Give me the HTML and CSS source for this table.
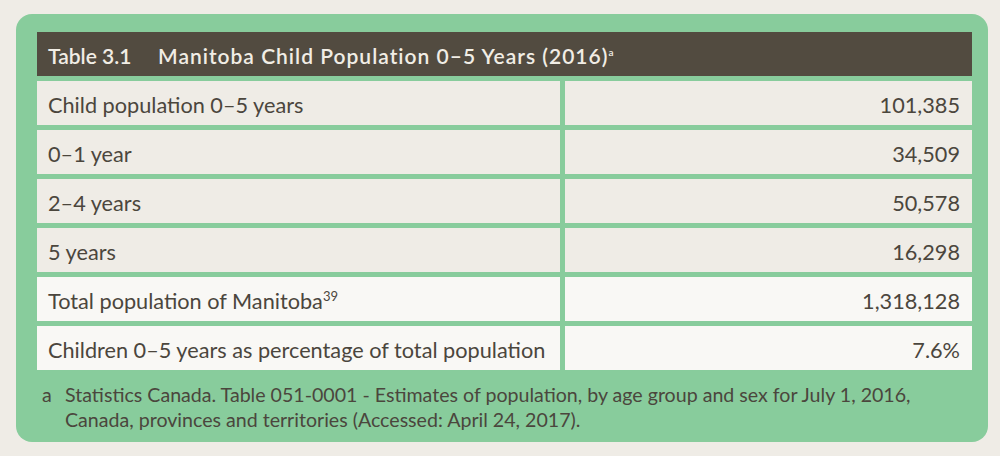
FILE: index.html
```html
<!DOCTYPE html>
<html lang="en">
<head>
<meta charset="utf-8">
<title>Table 3.1 Manitoba Child Population 0–5 Years (2016)</title>
<link rel="stylesheet" href="styles.css">
</head>
<body>
<div class="card">
  <div class="grid">
    <div class="head"><span class="tnum">Table 3.1</span><span class="ttl">Manitoba Child Population 0–5 Years (2016)<sup class="hsup">a</sup></span></div>
    <div class="cell">Child population 0–5 years</div><div class="cell num">101,385</div>
    <div class="cell">0–1 year</div><div class="cell num">34,509</div>
    <div class="cell">2–4 years</div><div class="cell num">50,578</div>
    <div class="cell">5 years</div><div class="cell num">16,298</div>
    <div class="cell light"><span>Total population of Manitoba<sup class="ref">39</sup></span></div><div class="cell light num">1,318,128</div>
    <div class="cell light">Children 0–5 years as percentage of total population</div><div class="cell light num">7.6%</div>
  </div>
  <div class="note">
    <span class="mark">a</span>
    <p class="ntext">Statistics Canada. Table 051-0001 - Estimates of population, by age group and sex for July 1, 2016, Canada, provinces and territories (Accessed: April 24, 2017).</p>
  </div>
</div>
</body>
</html>
```

FILE: styles.css
```css
html, body {
  margin: 0;
  padding: 0;
  background: #efece6;
}
body {
  padding: 14px 12px 14px 16px;
  font-family: Lato, "Open Sans", sans-serif;
  color: #4b463d;
}
.card {
  background: #88cc9c;
  border-radius: 16px;
  padding: 18px 16px 0 21px;
  height: 428px;
  box-sizing: border-box;
}
.grid {
  display: grid;
  grid-template-columns: 523px 407px;
  grid-auto-rows: 44px;
  column-gap: 5px;
  row-gap: 5px;
}
.head {
  grid-column: 1 / 3;
  background: #524b40;
  color: #f1ede5;
  font-size: 21px;
  font-weight: 600;
  display: flex;
  align-items: center;
  padding-left: 11px;
  padding-top: 2px;
  box-sizing: border-box;
}
.tnum {
  width: 110px;
}
.ttl {
  letter-spacing: 1px;
}
.hsup {
  font-size: 10px;
  vertical-align: 8px;
  line-height: 0;
  letter-spacing: 0;
}
.cell {
  background: #efece6;
  font-size: 21.7px;
  display: flex;
  align-items: center;
  padding: 3px 12px 0 11px;
  box-sizing: border-box;
  white-space: nowrap;
}
.cell.light {
  background: #f9f8f5;
}
.num {
  justify-content: flex-end;
}
.ref {
  font-size: 13px;
  vertical-align: 8px;
  line-height: 0;
}
.note {
  display: flex;
  padding: 12px 0 0 5px;
  font-size: 19.6px;
  line-height: 25px;
}
.mark {
  width: 23px;
  flex: none;
}
.ntext {
  margin: 0;
  width: 870px;
}
```
